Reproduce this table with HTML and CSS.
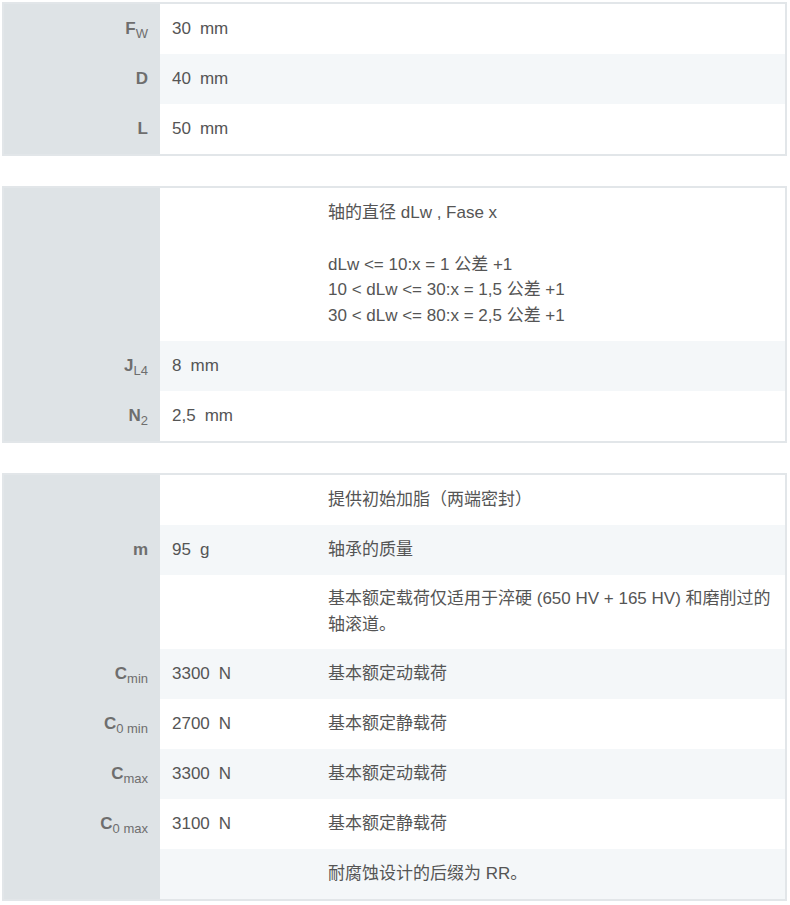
FILE: index.html
```
<!DOCTYPE html>
<html lang="zh-CN">
<head>
<meta charset="utf-8">
<title>Spec</title>
<link rel="stylesheet" href="styles.css">
</head>
<body>
<table class="spec">
  <colgroup><col class="c-label"><col class="c-val"><col class="c-note"></colgroup>
  <tr><th>F<sub>W</sub></th><td>30<span class="u">mm</span></td><td></td></tr>
  <tr><th>D</th><td>40<span class="u">mm</span></td><td></td></tr>
  <tr><th>L</th><td>50<span class="u">mm</span></td><td></td></tr>
</table>

<table class="spec">
  <colgroup><col class="c-label"><col class="c-val"><col class="c-note"></colgroup>
  <tr class="multi"><th></th><td></td><td>轴的直径 dLw , Fase x<br><br>dLw &lt;= 10:x = 1 公差 +1<br>10 &lt; dLw &lt;= 30:x = 1,5 公差 +1<br>30 &lt; dLw &lt;= 80:x = 2,5 公差 +1</td></tr>
  <tr><th>J<sub>L4</sub></th><td>8<span class="u">mm</span></td><td></td></tr>
  <tr><th>N<sub>2</sub></th><td>2,5<span class="u">mm</span></td><td></td></tr>
</table>

<table class="spec">
  <colgroup><col class="c-label"><col class="c-val"><col class="c-note"></colgroup>
  <tr><th></th><td></td><td>提供初始加脂（两端密封）</td></tr>
  <tr><th>m</th><td>95<span class="u">g</span></td><td>轴承的质量</td></tr>
  <tr class="multi two"><th></th><td></td><td>基本额定载荷仅适用于淬硬 (650 HV + 165 HV) 和磨削过的<br>轴滚道。</td></tr>
  <tr><th>C<sub>min</sub></th><td>3300<span class="u">N</span></td><td>基本额定动载荷</td></tr>
  <tr><th>C<sub>0 min</sub></th><td>2700<span class="u">N</span></td><td>基本额定静载荷</td></tr>
  <tr><th>C<sub>max</sub></th><td>3300<span class="u">N</span></td><td>基本额定动载荷</td></tr>
  <tr><th>C<sub>0 max</sub></th><td>3100<span class="u">N</span></td><td>基本额定静载荷</td></tr>
  <tr><th></th><td></td><td>耐腐蚀设计的后缀为 RR。</td></tr>
</table>
</body>
</html>
```
FILE: styles.css
```
html, body {
  background: #ffffff;
}
body {
  margin: 2px 0 0 2px;
  font-family: "Liberation Sans", Arial, "Noto Sans CJK SC", sans-serif;
  font-size: 17px;
  color: #555555;
}
.spec {
  width: 785px;
  border-collapse: separate;
  border-spacing: 0;
  table-layout: fixed;
  border: 2px solid #e2e6e9;
  margin: 0 0 30px 0;
}
.c-label { width: 156px; }
.c-val { width: 156px; }
.c-note { width: 469px; }
.spec tr {
  height: 50px;
}
.spec th, .spec td {
  padding: 0 12px;
  line-height: 25.5px;
  vertical-align: middle;
  text-align: left;
  white-space: nowrap;
}
.spec .multi td {
  padding-top: 12px;
  padding-bottom: 12px;
  line-height: 25.8px;
}
.spec .multi.two td {
  padding-top: 11.5px;
  padding-bottom: 11.5px;
  line-height: 25.5px;
}
.spec th {
  background: #dee3e6;
  text-align: right;
  font-weight: bold;
  color: #6e6e6e;
}
.spec sub {
  font-size: 13px;
  font-weight: normal;
  vertical-align: -4px;
  line-height: 0;
}
.spec tr:nth-child(even) td {
  background: #f4f7f9;
}
.u {
  margin-left: 9px;
}
```
